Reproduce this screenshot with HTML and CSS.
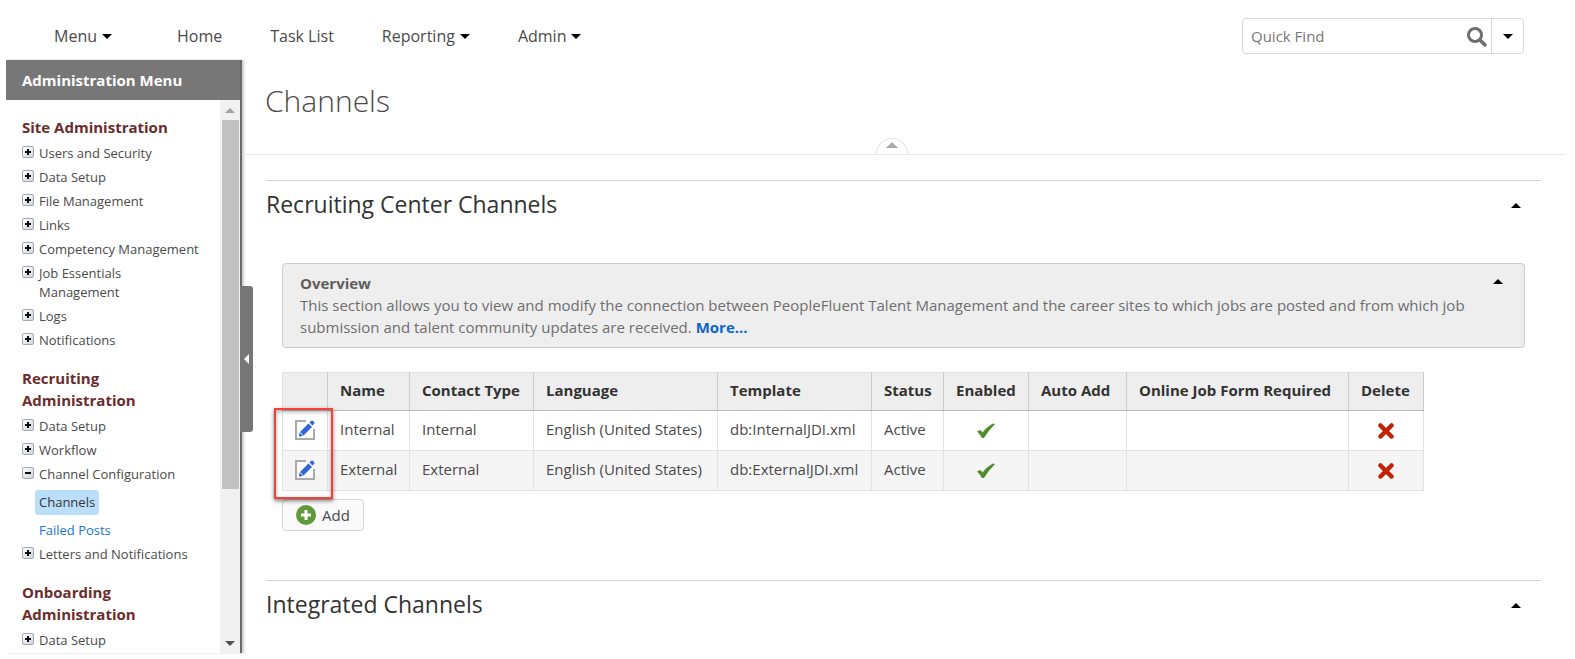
FILE: index.html
```html
<!DOCTYPE html>
<html lang="en">
<head>
  <meta charset="UTF-8" />
  <title>Channels</title>
  <link rel="stylesheet" href="styles.css">
</head>
<body>

  <!-- shared icons -->
  <svg class="icon-defs" aria-hidden="true">
    <symbol id="edit" viewBox="0 0 20 20">
      <path d="M11 1H1v18h18V9" fill="#fdfdfd" stroke="#a9a9a9" stroke-width="2"/>
      <path d="M5 12L13.500 3.500l3.500 3.500L8.500 15.500z" fill="#2f66d3"/>
      <path d="M4.500 12.500l3.500 3.500-4 .5z" fill="#2f66d3"/>
      <path d="M14.500 2.500L16 1q1-1 2 0l1 1q1 1 0 2l-1.500 1.500z" fill="#2f66d3"/>
    </symbol>
    <symbol id="check" viewBox="0 0 18 16">
      <path d="M0 8.500l3-1.500q1.500.5 2.500 2.500Q10 3.500 16 .5l2 .5Q12 7 7 15H5Q3 11 0 8.500z" fill="#4f8f2b"/>
    </symbol>
    <symbol id="cross" viewBox="0 0 16 16">
      <path d="M2.500 2.500l11 11M13.500 2.500l-11 11" stroke="#c42100" stroke-width="4.500" stroke-linecap="round"/>
    </symbol>
  </svg>

  <header class="topbar">
    <nav class="nav">
      <a class="first" href="#">Menu <span class="caret"></span></a>
      <a href="#">Home</a>
      <a href="#">Task List</a>
      <a href="#">Reporting <span class="caret"></span></a>
      <a href="#">Admin <span class="caret"></span></a>
    </nav>
    <form class="quick-find">
      <input type="text" placeholder="Quick Find" aria-label="Quick Find">
      <button type="button" class="search" aria-label="Search">
        <svg width="20" height="20" viewBox="0 0 20 20"><circle cx="8" cy="8" r="6.500" fill="none" stroke="#6e6e6e" stroke-width="3"/><path d="M13 13l5 5" stroke="#6e6e6e" stroke-width="3.500" stroke-linecap="round"/></svg>
      </button>
      <button type="button" class="options" aria-label="Search options"><span class="caret"></span></button>
    </form>
  </header>

  <div class="page">
    <aside class="sidebar">
      <h2>Administration Menu</h2>
      <div class="sidebar-body">
        <div class="menu">
          <h3>Site Administration</h3>
          <ul>
            <li><button class="toggle" aria-label="Expand"></button><a href="#">Users and Security</a></li>
            <li><button class="toggle" aria-label="Expand"></button><a href="#">Data Setup</a></li>
            <li><button class="toggle" aria-label="Expand"></button><a href="#">File Management</a></li>
            <li><button class="toggle" aria-label="Expand"></button><a href="#">Links</a></li>
            <li><button class="toggle" aria-label="Expand"></button><a href="#">Competency Management</a></li>
            <li><button class="toggle" aria-label="Expand"></button><a href="#">Job Essentials<br>Management</a></li>
            <li><button class="toggle" aria-label="Expand"></button><a href="#">Logs</a></li>
            <li><button class="toggle" aria-label="Expand"></button><a href="#">Notifications</a></li>
          </ul>
          <h3>Recruiting<br>Administration</h3>
          <ul>
            <li><button class="toggle" aria-label="Expand"></button><a href="#">Data Setup</a></li>
            <li><button class="toggle" aria-label="Expand"></button><a href="#">Workflow</a></li>
            <li>
              <button class="toggle open" aria-label="Collapse"></button><a href="#">Channel Configuration</a>
              <div class="submenu">
                <a class="active" href="#">Channels</a>
                <a href="#">Failed Posts</a>
              </div>
            </li>
            <li><button class="toggle" aria-label="Expand"></button><a href="#">Letters and Notifications</a></li>
          </ul>
          <h3>Onboarding<br>Administration</h3>
          <ul>
            <li><button class="toggle" aria-label="Expand"></button><a href="#">Data Setup</a></li>
          </ul>
        </div>
        <div class="scrollbar">
          <span class="arrow up"></span>
          <div class="track"><div class="thumb"></div></div>
          <span class="arrow down"></span>
        </div>
      </div>
      <button class="collapse" aria-label="Hide menu"></button>
    </aside>

    <main>
      <div class="page-title">
        <h1>Channels</h1>
        <button class="fold" aria-label="Hide title"></button>
      </div>

      <section>
        <div class="section-head">
          <h2>Recruiting Center Channels</h2>
          <button class="fold-section" aria-label="Collapse"><span class="caret up"></span></button>
        </div>
        <div class="section-body">
          <div class="overview">
            <div class="overview-text">
              <strong>Overview</strong>
              <p>This section allows you to view and modify the connection between PeopleFluent Talent Management and the career sites to which jobs are posted and from which job submission and talent community updates are received. <a href="#">More...</a></p>
            </div>
            <button class="fold-section" aria-label="Collapse"><span class="caret up"></span></button>
          </div>

          <div class="table-wrap">
            <table>
              <colgroup>
                <col class="c-edit"><col class="c-name"><col class="c-contact"><col class="c-lang"><col class="c-template">
                <col class="c-status"><col class="c-enabled"><col class="c-auto"><col class="c-form"><col class="c-delete">
              </colgroup>
              <thead>
                <tr>
                  <th></th>
                  <th>Name</th>
                  <th>Contact Type</th>
                  <th>Language</th>
                  <th>Template</th>
                  <th>Status</th>
                  <th>Enabled</th>
                  <th>Auto Add</th>
                  <th>Online Job Form Required</th>
                  <th>Delete</th>
                </tr>
              </thead>
              <tbody>
                <tr>
                  <td class="center"><button class="icon-btn" aria-label="Edit"><svg width="20" height="20"><use href="#edit"/></svg></button></td>
                  <td>Internal</td>
                  <td>Internal</td>
                  <td>English (United States)</td>
                  <td>db:InternalJDI.xml</td>
                  <td>Active</td>
                  <td class="center"><svg class="check" width="18" height="16"><use href="#check"/></svg></td>
                  <td></td>
                  <td></td>
                  <td class="center"><button class="icon-btn" aria-label="Delete"><svg width="16" height="16"><use href="#cross"/></svg></button></td>
                </tr>
                <tr>
                  <td class="center"><button class="icon-btn" aria-label="Edit"><svg width="20" height="20"><use href="#edit"/></svg></button></td>
                  <td>External</td>
                  <td>External</td>
                  <td>English (United States)</td>
                  <td>db:ExternalJDI.xml</td>
                  <td>Active</td>
                  <td class="center"><svg class="check" width="18" height="16"><use href="#check"/></svg></td>
                  <td></td>
                  <td></td>
                  <td class="center"><button class="icon-btn" aria-label="Delete"><svg width="16" height="16"><use href="#cross"/></svg></button></td>
                </tr>
              </tbody>
            </table>
            <div class="highlight"></div>
          </div>

          <button class="add">
            <svg width="20" height="20" viewBox="0 0 20 20"><circle cx="10" cy="10" r="10" fill="#5f9a38"/><path d="M10 5v10M5 10h10" stroke="#fff" stroke-width="3"/></svg>
            Add
          </button>
        </div>
      </section>

      <section>
        <div class="section-head">
          <h2>Integrated Channels</h2>
          <button class="fold-section" aria-label="Expand"><span class="caret up"></span></button>
        </div>
      </section>
    </main>
  </div>

</body>
</html>
```
FILE: styles.css
```css
* {
  box-sizing: border-box;
}
body {
  margin: 0;
  padding: 0 9px 6px 6px;
  height: 100vh;
  display: flex;
  flex-direction: column;
  overflow: hidden;
  background: #fff;
  color: #4a4a4a;
  font-family: "Segoe UI", "Open Sans", sans-serif;
  font-size: 15px;
  line-height: 22px;
}
h1, h2, h3, p, ul {
  margin: 0;
  padding: 0;
}
a {
  color: inherit;
  text-decoration: none;
}
button, input {
  font: inherit;
  color: inherit;
  padding: 0;
  border: none;
  background: none;
}
button {
  cursor: pointer;
}
.icon-defs {
  position: absolute;
  width: 0;
  height: 0;
}
.caret {
  display: inline-block;
  border: 5px solid transparent;
  border-top-color: #000;
  border-bottom: none;
}
.caret.up {
  border-top: none;
  border-bottom: 5px solid #000;
}

/* top bar */
.topbar {
  flex: none;
  height: 60px;
  padding: 18px 42px 0 48px;
  display: flex;
  justify-content: space-between;
  align-items: flex-start;
}
.nav {
  display: flex;
  gap: 48px;
  font-size: 16px;
  line-height: 36px;
}
.nav a {
  display: flex;
  align-items: center;
  gap: 5px;
}
.nav .first {
  margin-right: 17px;
}
.quick-find {
  display: flex;
  width: 282px;
  height: 36px;
  border: 1px solid #d4d4d4;
  border-radius: 4px;
}
.quick-find input {
  flex: 1;
  min-width: 0;
  padding-left: 8px;
  outline: none;
}
.quick-find input::placeholder {
  color: #777;
}
.search {
  width: 28px;
  padding-top: 6px;
}
.options {
  width: 32px;
  border-left: 1px solid #d4d4d4;
  display: flex;
  align-items: center;
  justify-content: center;
}

.page {
  flex: 1;
  min-height: 0;
  display: flex;
}

/* sidebar */
.sidebar {
  position: relative;
  flex: none;
  width: 236px;
  display: flex;
  flex-direction: column;
  border-right: 2px solid #6a6a6a;
  box-shadow: 2px 0 2px #ccc;
}
.sidebar h2 {
  flex: none;
  padding: 1px 0 0 16px;
  background: #777;
  color: #fff;
  font-size: 15px;
  line-height: 39px;
}
.sidebar-body {
  flex: 1;
  min-height: 0;
  display: flex;
}
.menu {
  flex: 1;
  padding: 16px 0 0 16px;
  overflow: hidden;
  font-size: 13px;
  line-height: 19px;
}
.menu h3 {
  margin-bottom: 6px;
  color: #6b2c2c;
  font-size: 15px;
  line-height: 22px;
}
.menu ul {
  margin-bottom: 17px;
  list-style: none;
}
.menu li {
  display: grid;
  grid-template-columns: 17px 1fr;
  align-items: start;
  margin-bottom: 5px;
  white-space: nowrap;
}
.toggle {
  width: 12px;
  height: 12px;
  margin-top: 2px;
  border: 1px solid #a3a7b3;
  border-radius: 2px;
  background:
    linear-gradient(#111, #111) center / 6px 2px no-repeat,
    linear-gradient(#111, #111) center / 2px 6px no-repeat,
    linear-gradient(135deg, #fff, #cfd2dc);
}
.toggle.open {
  background:
    linear-gradient(#111, #111) center / 6px 2px no-repeat,
    linear-gradient(135deg, #fff, #cfd2dc);
}
.submenu {
  grid-column: 2;
  display: flex;
  flex-direction: column;
  align-items: flex-start;
  gap: 3px;
  margin: 6px 0 -3px -4px;
  line-height: 25px;
}
.submenu a {
  padding: 0 4px;
  color: #1976d2;
}
.submenu .active {
  background: #bbdefb;
  color: #333;
  border-radius: 3px;
}
.scrollbar {
  width: 20px;
  display: flex;
  flex-direction: column;
  background: #f1f1f1;
}
.arrow {
  height: 20px;
  display: flex;
  align-items: center;
  justify-content: center;
}
.arrow::before {
  content: "";
  border: 5px solid transparent;
}
.arrow.up::before {
  border-top: none;
  border-bottom-color: #a3a3a3;
}
.arrow.down::before {
  border-bottom: none;
  border-top-color: #505050;
}
.track {
  flex: 1;
  padding: 0 1px 0 2px;
}
.thumb {
  height: 72%;
  background: #c1c1c1;
}
.collapse {
  position: absolute;
  top: 226px;
  left: 100%;
  width: 13px;
  height: 146px;
  border-radius: 0 3px 3px 0;
  background: #777;
}
.collapse::before {
  content: "";
  display: block;
  width: 0;
  margin-left: 4px;
  border: 5px solid transparent;
  border-right-color: #fff;
  border-left: none;
}

/* main column */
main {
  flex: 1;
  min-width: 0;
  overflow: hidden;
}
.page-title {
  position: relative;
  height: 95px;
  padding: 18px 0 0 23px;
  border-bottom: 1px solid #e8e8e8;
}
.page-title h1 {
  font-size: 30px;
  font-weight: 300;
  line-height: 46px;
}
.fold {
  position: absolute;
  left: 50%;
  bottom: 0;
  width: 32px;
  height: 16px;
  margin-left: -28px;
  border: 1px solid #e4e4e4;
  border-bottom: none;
  border-radius: 16px 16px 0 0;
  display: flex;
  justify-content: center;
  align-items: flex-start;
  padding-top: 3px;
}
.fold::before {
  content: "";
  border: 6px solid transparent;
  border-top: none;
  border-bottom-color: #aaa;
}
section {
  margin: 25px 25px 0 24px;
  border-top: 1px solid #d4d4d4;
}
.section-head {
  display: flex;
  justify-content: space-between;
  align-items: center;
  padding: 6px 20px 6px 0;
}
.section-head h2 {
  padding-bottom: 2px;
  color: #333;
  font-size: 23px;
  font-weight: 400;
  line-height: 34px;
}
.fold-section {
  display: flex;
}
.section-body {
  padding: 34px 16px 24px;
}
.overview {
  display: flex;
  align-items: flex-start;
  justify-content: space-between;
  padding: 8px 21px 9px 17px;
  border: 1px solid #ccc;
  border-radius: 4px;
  background: #eee;
  color: #6e6e6e;
}
.overview strong {
  display: block;
  color: #5e5e5e;
}
.overview a {
  color: #0d66c2;
  font-weight: 700;
}
.overview .fold-section {
  margin-top: 7px;
}

/* channel table */
.table-wrap {
  position: relative;
  margin: 24px 0 8px;
}
table {
  table-layout: fixed;
  width: 1141px;
  border-collapse: collapse;
}
.c-edit { width: 45px; }
.c-name { width: 82px; }
.c-contact { width: 124px; }
.c-lang { width: 184px; }
.c-template { width: 154px; }
.c-status { width: 72px; }
.c-enabled { width: 85px; }
.c-auto { width: 98px; }
.c-form { width: 222px; }
.c-delete { width: 75px; }
th, td {
  padding: 0 0 3px 12px;
  border: 1px solid #e2e2e2;
  text-align: left;
  white-space: nowrap;
}
th {
  height: 38px;
  background: #eee;
  border-right-color: #ccc;
  border-bottom-color: #bbb;
  color: #333;
}
td {
  height: 40px;
}
tbody tr:nth-child(even) {
  background: #f5f5f5;
}
td.center {
  padding: 0 0 3px;
  text-align: center;
}
.icon-btn, .check {
  vertical-align: middle;
}
.icon-btn svg {
  display: block;
}
.highlight {
  position: absolute;
  top: 36px;
  left: -8px;
  width: 59px;
  height: 91px;
  border: 2px solid #f44336;
  box-shadow: 0 2px 4px rgba(0,0,0,0.5), inset 0 2px 4px rgba(0,0,0,0.3);
  pointer-events: none;
}
.add {
  display: flex;
  align-items: center;
  gap: 6px;
  height: 32px;
  padding: 0 13px;
  border: 1px solid #d4d4d4;
  border-radius: 4px;
  background: #fafafa;
}
```
